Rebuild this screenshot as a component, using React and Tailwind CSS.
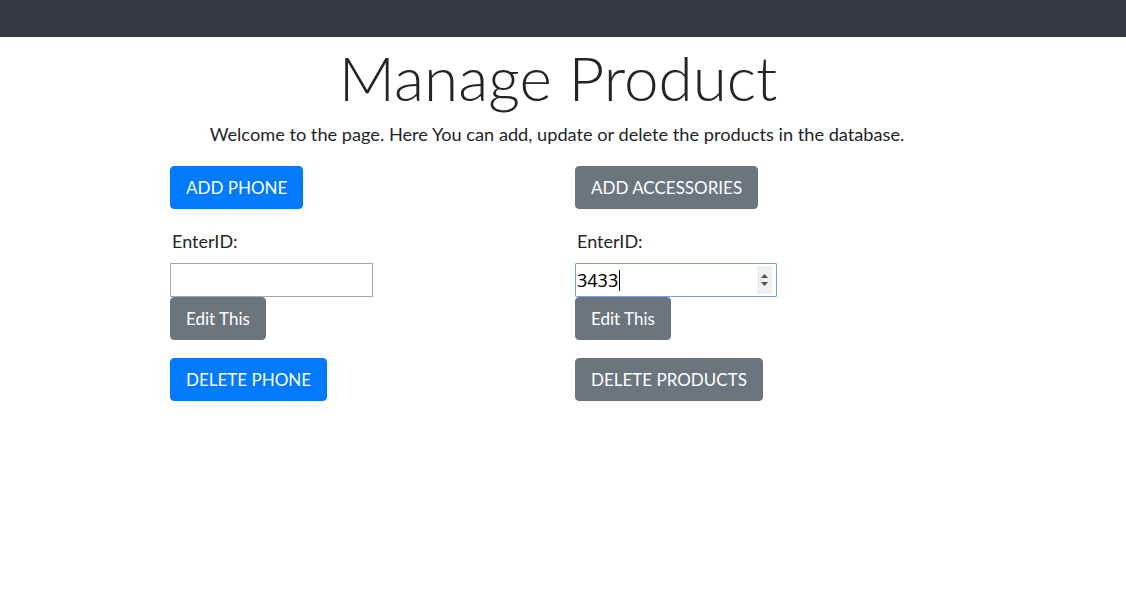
import React from "react";

function Btn({ children, color }) {
  const cls =
    color === "blue"
      ? "bg-[#007bff] border-[#007bff]"
      : "bg-[#6c757d] border-[#6c757d]";
  return (
    <button
      className={`${cls} text-white border rounded-[4px] px-[15px] py-[7px] text-[17px] leading-[27px] self-start`}
    >
      {children}
    </button>
  );
}

export default function App() {
  return (
    <div className="min-h-[613px] bg-white text-[#212529] font-['Lato','Noto_Sans',sans-serif]">
      <div className="h-[37px] bg-[#343a40]" />
      <h1 className="text-center text-[62px] font-light leading-[76px] mt-[2px] pr-[10px]">
        Manage Product
      </h1>
      <p className="text-center text-[18.2px] leading-[27px] mt-[6px] pr-[12px]">
        Welcome to the page. Here You can add, update or delete the products in the database.
      </p>
      <div className="grid grid-cols-[405px_405px] pl-[170px] mt-[18px]">
        <div className="flex flex-col">
          <Btn color="blue">ADD PHONE</Btn>
          <label className="mt-[18px] ml-[2px] text-[18px] leading-[28px]">EnterID:</label>
          <input
            type="number"
            className="mt-[8px] w-[203px] h-[34px] border border-[#a9a9a9] outline-none px-[2px] text-[17px]"
          />
          <Btn color="gray">Edit This</Btn>
          <div className="mt-[18px] flex">
            <Btn color="blue">DELETE PHONE</Btn>
          </div>
        </div>
        <div className="flex flex-col">
          <Btn color="gray">ADD ACCESSORIES</Btn>
          <label className="mt-[18px] ml-[2px] text-[18px] leading-[28px]">EnterID:</label>
          <div className="mt-[8px] w-[202px] h-[34px] border-[1.5px] border-[#7b9fe0] rounded-[1px] flex items-center pl-[1px] pr-[4px] text-[18px] font-['Noto_Sans','Lato',sans-serif]">
            <span className="text-black">3433</span>
            <span className="w-px h-[21px] bg-black ml-[1px]" />
            <div className="flex-1" />
            <div className="w-[15px] h-[28px] bg-[#f0f0f0] flex flex-col items-center justify-center gap-[4px]">
              <svg width="7" height="4" viewBox="0 0 7 4"><path d="M0 4L3.5 0L7 4Z" fill="#505050" /></svg>
              <svg width="7" height="4" viewBox="0 0 7 4"><path d="M0 0L3.5 4L7 0Z" fill="#505050" /></svg>
            </div>
          </div>
          <Btn color="gray">Edit This</Btn>
          <div className="mt-[18px] flex">
            <Btn color="gray">DELETE PRODUCTS</Btn>
          </div>
        </div>
      </div>
    </div>
  );
}
